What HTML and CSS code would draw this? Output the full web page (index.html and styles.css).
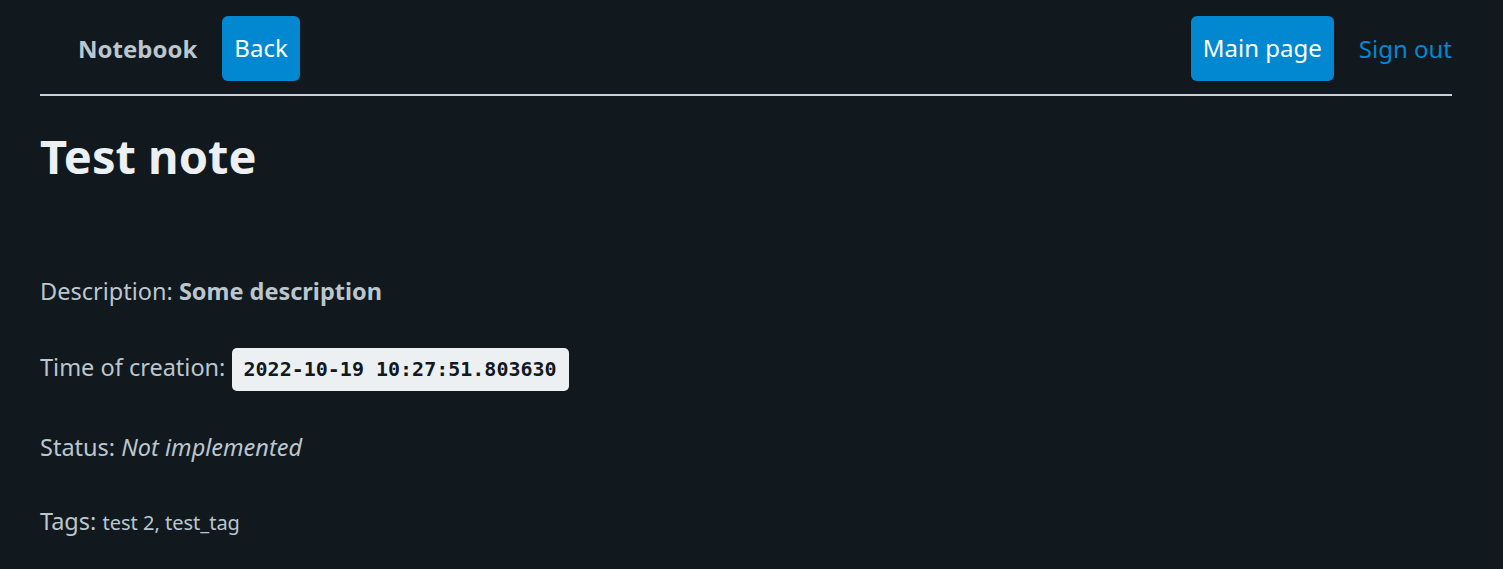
FILE: index.html
```html
<!DOCTYPE html>
<html lang="en">
<head>
<meta charset="utf-8">
<title>Test note</title>
<link rel="stylesheet" href="styles.css">
</head>
<body>
<div class="page">
  <nav class="nav">
    <div class="nav-group">
      <strong class="brand">Notebook</strong>
      <a class="btn" href="#">Back</a>
    </div>
    <div class="nav-group">
      <a class="btn" href="#">Main page</a>
      <a class="link" href="#">Sign out</a>
    </div>
  </nav>
  <main class="content">
    <h1 class="title">Test note</h1>
    <p class="row">Description: <strong>Some description</strong></p>
    <p class="row">Time of creation: <code class="code">2022-10-19 10:27:51.803630</code></p>
    <p class="row">Status: <em>Not implemented</em></p>
    <p class="row">Tags: <small class="tags">test 2, test_tag</small></p>
  </main>
</div>
</body>
</html>
```
FILE: styles.css
```css
html, body {
  margin: 0;
  padding: 0;
  background: #11191f;
}
body {
  font-family: "Noto Sans", "Open Sans", sans-serif;
  font-size: 23.5px;
  color: #bbc6ce;
  line-height: 1.5;
}
.page {
  padding: 0 51px 0 40px;
}
.nav {
  display: flex;
  justify-content: space-between;
  align-items: center;
  padding: 16px 0 13px;
  border-bottom: 2px solid #c8d1d8;
}
.nav-group {
  display: flex;
  align-items: center;
  gap: 25px;
}
.brand {
  margin-left: 38px;
  font-weight: 700;
  font-size: 24px;
}
.btn {
  display: block;
  background: #0288d1;
  color: #ffffff;
  text-decoration: none;
  border-radius: 6px;
  padding: 14px 12px 15px;
  line-height: 36px;
  font-size: 24px;
}
.link {
  color: #0288d1;
  text-decoration: none;
  font-size: 24px;
}
.title {
  margin: 31px 0 0;
  font-size: 47px;
  line-height: 1.25;
  color: #edf0f3;
  font-weight: 700;
}
.content {
  padding-bottom: 20px;
}
.title + .row {
  margin-top: 88px;
}
.row {
  margin: 39px 0 0;
}
.code {
  display: inline-block;
  font-family: "DejaVu Sans Mono", monospace;
  font-size: 20px;
  font-weight: 700;
  background: #edf0f3;
  color: #11191f;
  border-radius: 5px;
  padding: 5px 12px;
  line-height: 33px;
}
.tags {
  font-size: 20px;
}
```
